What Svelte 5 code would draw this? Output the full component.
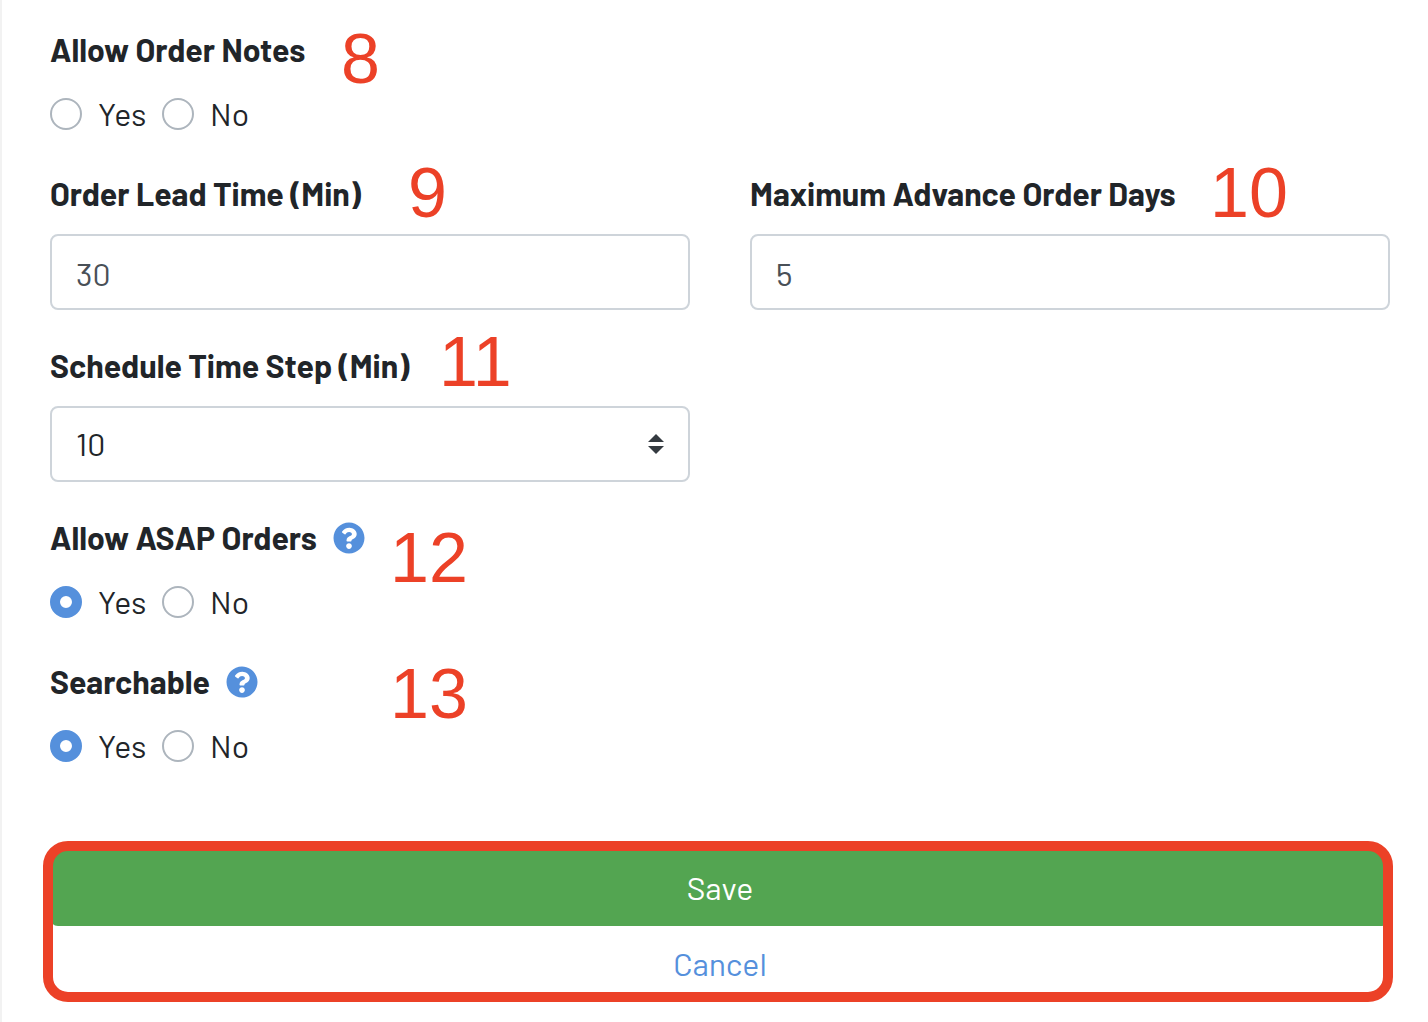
<script lang="ts">
	interface Marker {
		number: number;
		x: number;
		y: number;
	}

	interface Field {
		id: string;
		label: string;
		type: 'radio' | 'text' | 'select';
		help?: string;
		// Callout position, measured from the field's top left corner
		marker: Marker;
	}

	const fields: Field[] = [
		{ id: 'notes', label: 'Allow Order Notes', type: 'radio', marker: { number: 8, x: 291, y: -3 } },
		{ id: 'lead', label: 'Order Lead Time (Min)', type: 'text', marker: { number: 9, x: 358, y: -13 } },
		{ id: 'advance', label: 'Maximum Advance Order Days', type: 'text', marker: { number: 10, x: 460, y: -13 } },
		{ id: 'step', label: 'Schedule Time Step (Min)', type: 'select', marker: { number: 11, x: 389, y: -16 } },
		{ id: 'asap', label: 'Allow ASAP Orders', type: 'radio', help: 'About ASAP orders', marker: { number: 12, x: 340, y: 8 } },
		{ id: 'searchable', label: 'Searchable', type: 'radio', help: 'About searchable', marker: { number: 13, x: 340, y: 0 } }
	];

	const steps = ['5', '10', '15', '30', '60'];

	let values = $state<Record<string, string>>({
		notes: '',
		lead: '30',
		advance: '5',
		step: '10',
		asap: 'Yes',
		searchable: 'Yes'
	});
</script>

<form class="settings" onsubmit={(e) => e.preventDefault()}>
	<div class="fields">
		{#each fields as field (field.id)}
			<div class="field" class:wide={field.type === 'radio'}>
				{#if field.type === 'radio'}
					<div class="label" id="{field.id}-label">
						{field.label}
						{#if field.help}
							<button class="help" type="button" aria-label={field.help}>
								<svg viewBox="0 0 512 512" aria-hidden="true">
									<path
										fill="currentColor"
										d="M504 256c0 136.997-111.043 248-248 248S8 392.997 8 256C8 119.083 119.043 8 256 8s248 111.083 248 248zM262.655 90c-54.497 0-89.255 22.957-116.549 63.758-3.536 5.286-2.353 12.415 2.715 16.258l34.699 26.31c5.205 3.947 12.621 3.008 16.665-2.122 17.864-22.658 30.113-35.797 57.303-35.797 20.429 0 45.698 13.148 45.698 32.958 0 14.976-12.363 22.667-32.534 33.976C247.128 238.528 216 254.941 216 296v4c0 6.627 5.373 12 12 12h56c6.627 0 12-5.373 12-12v-1.333c0-28.462 83.186-29.647 83.186-106.667 0-58.002-60.165-102-116.531-102zM256 338c-25.365 0-46 20.635-46 46 0 25.364 20.635 46 46 46s46-20.636 46-46c0-25.365-20.635-46-46-46z"
									/>
								</svg>
							</button>
						{/if}
					</div>
					<div class="options" role="radiogroup" aria-labelledby="{field.id}-label">
						{#each ['Yes', 'No'] as option}
							<label class="option">
								<input type="radio" name={field.id} value={option} bind:group={values[field.id]} />
								{option}
							</label>
						{/each}
					</div>
				{:else}
					<label class="label" for={field.id}>{field.label}</label>
					{#if field.type === 'select'}
						<select class="control" id={field.id} bind:value={values[field.id]}>
							{#each steps as step}
								<option value={step}>{step}</option>
							{/each}
						</select>
					{:else}
						<input class="control" id={field.id} type="text" bind:value={values[field.id]} />
					{/if}
				{/if}
				<span class="marker" style="left: {field.marker.x}px; top: {field.marker.y}px">{field.marker.number}</span>
			</div>
		{/each}
	</div>

	<div class="actions">
		<button class="btn save" type="submit">Save</button>
		<button class="btn cancel" type="button">Cancel</button>
	</div>
</form>

<style>
	:global(body) {
		background: #fff;
	}

	.settings {
		padding: 26px 38px 20px 48px;
		border-left: 2px solid #f2f2f2;
		color: #212529;
		font-family: Barlow, Roboto, sans-serif;
		font-size: 32px;
		line-height: 46px;
	}

	.fields {
		display: grid;
		grid-template-columns: repeat(2, minmax(0, 1fr));
		gap: 32px 60px;
	}

	.field {
		position: relative;
	}

	.wide {
		grid-column: 1 / -1;
	}

	.label {
		display: flex;
		align-items: center;
		gap: 16px;
		margin-bottom: 18px;
		font-weight: 700;
		white-space: nowrap;
	}

	.help {
		display: flex;
		margin-top: 2px;
		padding: 0;
		border: 0;
		background: none;
		color: #5590dc;
		cursor: pointer;
	}

	.help svg {
		width: 32px;
		height: 32px;
	}

	.options {
		display: flex;
		padding-bottom: 2px;
	}

	.option {
		display: flex;
		align-items: center;
		gap: 16px;
		width: 112px;
	}

	.option input {
		appearance: none;
		flex: none;
		width: 32px;
		height: 32px;
		margin: 2px 0 0;
		border: 2px solid #adb5bd;
		border-radius: 50%;
		background: #fff;
	}

	.option input:checked {
		border: 10px solid #5590dc;
	}

	.control {
		appearance: none;
		box-sizing: border-box;
		display: block;
		width: 100%;
		height: 76px;
		padding: 2px 24px 0;
		border: 2px solid #ced4da;
		border-radius: 8px;
		background: #fff;
		color: #495057;
		font: inherit;
	}

	select.control {
		padding: 0 24px 2px;
		background: #fff url("data:image/svg+xml,%3Csvg xmlns='http://www.w3.org/2000/svg' viewBox='0 0 4 5'%3E%3Cpath fill='%23343a40' d='M2 0L0 2h4zm0 5L0 3h4z'/%3E%3C/svg%3E") no-repeat right 24px center / 16px 20px;
		color: #212529;
	}

	.marker {
		position: absolute;
		color: #ec4127;
		font-family: 'Liberation Sans', Arial, sans-serif;
		font-size: 70px;
		line-height: 72px;
		pointer-events: none;
	}

	.actions {
		position: relative;
		margin-top: 80px;
	}

	/* Highlight frame drawn over the edges of both buttons */
	.actions::after {
		content: '';
		position: absolute;
		inset: -9px -3px 0 -7px;
		border: 10px solid #ec4127;
		border-radius: 25px;
		pointer-events: none;
	}

	.btn {
		display: block;
		width: 100%;
		height: 76px;
		padding: 0 0 2px;
		border: 0;
		border-radius: 8px;
		font: inherit;
		cursor: pointer;
	}

	.save {
		background: #53a551;
		color: #fff;
	}

	.cancel {
		background: none;
		color: #5590dc;
	}
</style>
